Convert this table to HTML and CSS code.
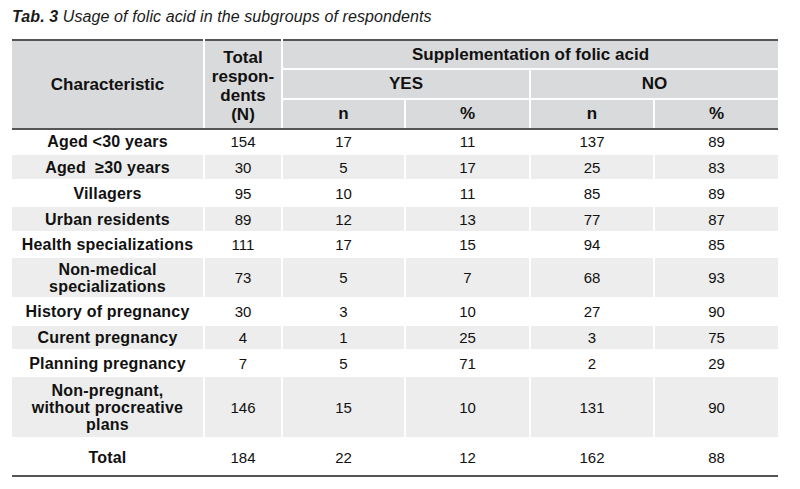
FILE: index.html
```html
<!DOCTYPE html>
<html>
<head>
<meta charset="utf-8">
<link rel="stylesheet" href="styles.css">
</head>
<body>
<div class="page">
  <p class="caption"><b>Tab. 3</b> Usage of folic acid in the subgroups of respondents</p>
  <table class="data">
    <colgroup>
      <col class="c-char"><col class="c-tot"><col class="c-yn"><col class="c-yp"><col class="c-nn"><col class="c-np">
    </colgroup>
    <thead>
      <tr class="h1">
        <th rowspan="3" class="first">Characteristic</th>
        <th rowspan="3" class="tot">Total<br>respon-<br>dents<br>(N)</th>
        <th colspan="4" class="last">Supplementation of folic acid</th>
      </tr>
      <tr class="h2">
        <th colspan="2">YES</th>
        <th colspan="2" class="last">NO</th>
      </tr>
      <tr class="h3">
        <th>n</th><th>%</th><th>n</th><th class="last">%</th>
      </tr>
    </thead>
    <tbody>
      <tr class="r1"><td class="first">Aged &lt;30 years</td><td>154</td><td>17</td><td>11</td><td>137</td><td class="last">89</td></tr>
      <tr class="r2 alt"><td class="first">Aged &nbsp;≥30 years</td><td>30</td><td>5</td><td>17</td><td>25</td><td class="last">83</td></tr>
      <tr class="r3"><td class="first">Villagers</td><td>95</td><td>10</td><td>11</td><td>85</td><td class="last">89</td></tr>
      <tr class="r4 alt"><td class="first">Urban residents</td><td>89</td><td>12</td><td>13</td><td>77</td><td class="last">87</td></tr>
      <tr class="r5"><td class="first">Health specializations</td><td>111</td><td>17</td><td>15</td><td>94</td><td class="last">85</td></tr>
      <tr class="r6 alt"><td class="first">Non-medical<br>specializations</td><td>73</td><td>5</td><td>7</td><td>68</td><td class="last">93</td></tr>
      <tr class="r7"><td class="first">History of pregnancy</td><td>30</td><td>3</td><td>10</td><td>27</td><td class="last">90</td></tr>
      <tr class="r8 alt"><td class="first">Curent pregnancy</td><td>4</td><td>1</td><td>25</td><td>3</td><td class="last">75</td></tr>
      <tr class="r9"><td class="first">Planning pregnancy</td><td>7</td><td>5</td><td>71</td><td>2</td><td class="last">29</td></tr>
      <tr class="r10 alt"><td class="first">Non-pregnant,<br>without procreative<br>plans</td><td>146</td><td>15</td><td>10</td><td>131</td><td class="last">90</td></tr>
      <tr class="r11 total"><td class="first">Total</td><td>184</td><td>22</td><td>12</td><td>162</td><td class="last">88</td></tr>
    </tbody>
  </table>
</div>
</body>
</html>
```
FILE: styles.css
```css
html, body {
  margin: 0;
  padding: 0;
  background: #fff;
}
.page {
  padding: 8px 0 0 12px;
  font-family: "Liberation Sans", Arial, sans-serif;
  color: #111;
}
.caption {
  margin: 0 0 14px 0;
  font-size: 16px;
  line-height: 17px;
  letter-spacing: 0.1px;
  font-style: italic;
  color: #1a1a1a;
}
.caption b {
  font-weight: bold;
}
.data {
  border-collapse: collapse;
  width: 766px;
  table-layout: fixed;
}
.c-char { width: 192px; }
.c-tot { width: 78px; }
.c-yn { width: 123px; }
.c-yp { width: 125px; }
.c-nn { width: 124px; }
.c-np { width: 124px; }

.data th, .data td {
  border: 2px solid #fff;
  padding: 0;
  text-align: center;
  vertical-align: middle;
}
.data .first { border-left: 0; }
.data .last { border-right: 0; }

.data th {
  background: #d9dadb;
  font-size: 17px;
  line-height: 18px;
  font-weight: bold;
  color: #111;
}
.data th.tot {
  line-height: 19px;
  padding-top: 3px;
}
.data tr.h1 th { border-top: 2px solid #555; }
.data thead th[rowspan], .data tr.h3 th { border-bottom: 2px solid #555; }

.h1 { height: 29px; }
.h2 { height: 30px; }
.h3 { height: 30px; }

.data td {
  font-size: 15px;
  line-height: 17px;
  color: #111;
}
.data td.first {
  font-size: 16px;
  letter-spacing: 0.2px;
  font-weight: bold;
}
.data tr.alt td {
  background: #ecedec;
}
.data tr.total td {
  border-bottom: 2px solid #555;
}

.r1 { height: 25px; }
.r2, .r3, .r4, .r9 { height: 26px; }
.r5 { height: 25px; }
.r6 { height: 41px; }
.r7 { height: 27px; }
.r8 { height: 25px; }
.r10 { height: 62px; }
.r11 { height: 38px; }
```
